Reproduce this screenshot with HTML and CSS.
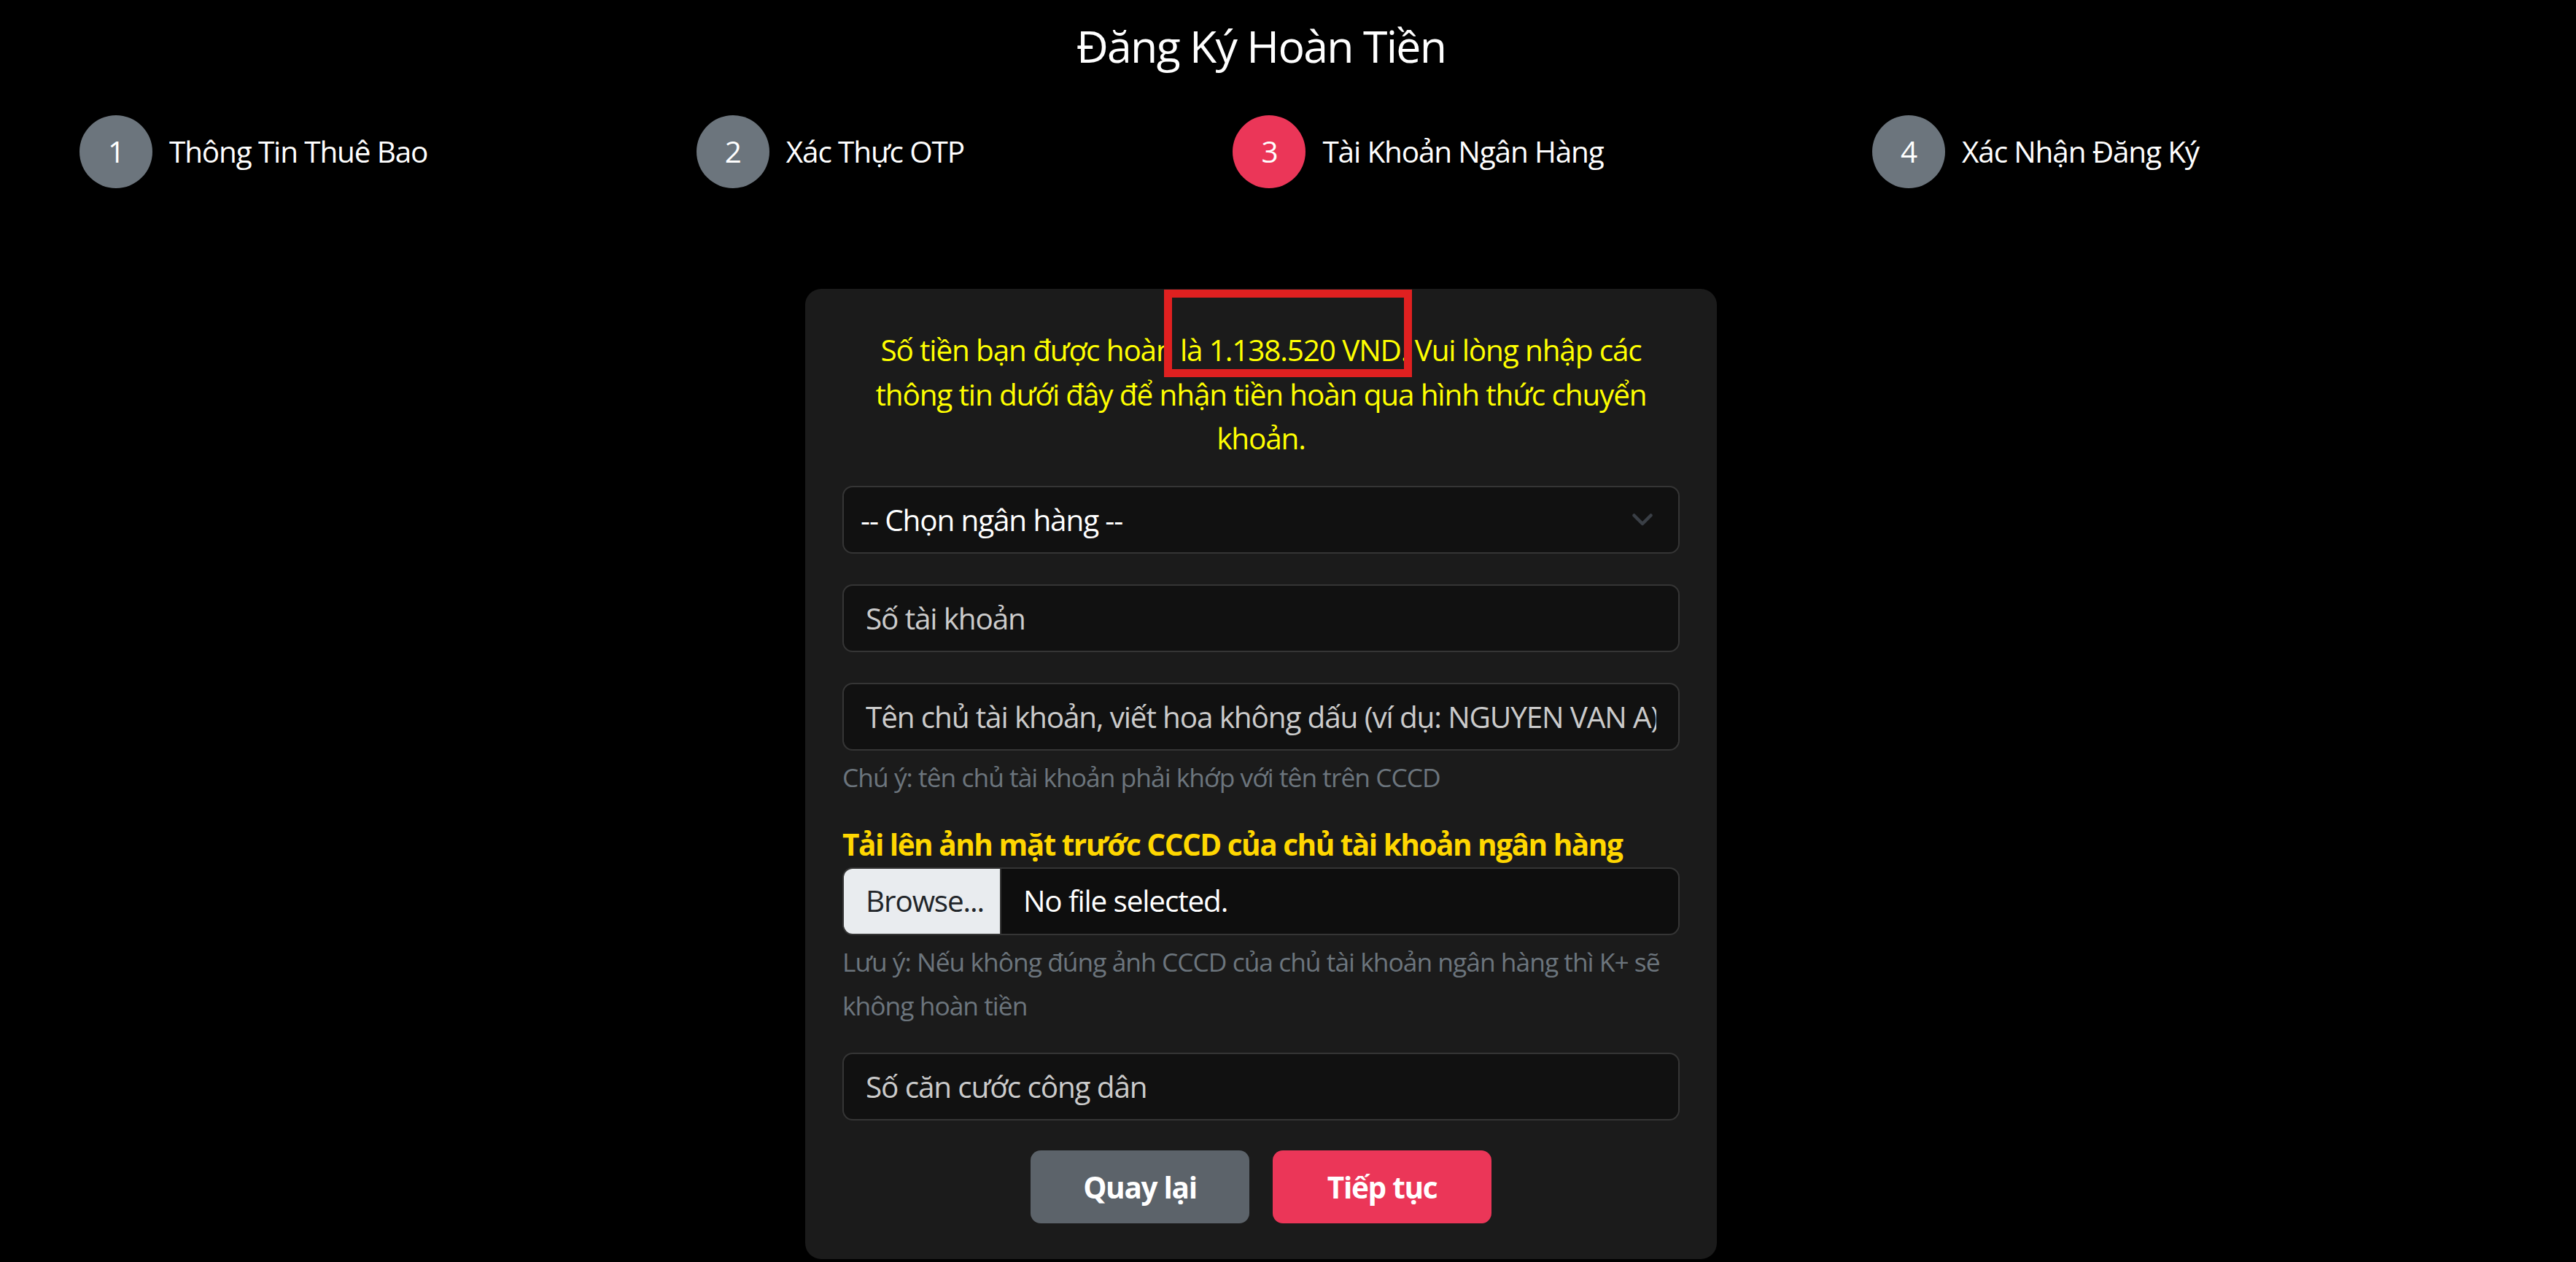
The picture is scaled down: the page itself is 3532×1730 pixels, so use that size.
FILE: index.html
```html
<!DOCTYPE html>
<html lang="vi">
<head>
    <meta charset="UTF-8" />
    <meta name="viewport" content="width=device-width, initial-scale=1.0" />
    <title>Đăng Ký Hoàn Tiền</title>
    <link rel="stylesheet" href="styles.css">
</head>
<body>
    <div class="page">
        <h1 class="title">Đăng Ký Hoàn Tiền</h1>

        <div class="steps">
            <div class="step">
                <span class="step-num">1</span>
                <span class="step-label">Thông Tin Thuê Bao</span>
            </div>
            <div class="step">
                <span class="step-num">2</span>
                <span class="step-label">Xác Thực OTP</span>
            </div>
            <div class="step active">
                <span class="step-num">3</span>
                <span class="step-label">Tài Khoản Ngân Hàng</span>
            </div>
            <div class="step">
                <span class="step-num">4</span>
                <span class="step-label">Xác Nhận Đăng Ký</span>
            </div>
        </div>

        <div class="card">
            <div class="highlight"></div>
            <p class="notice">Số tiền bạn được hoàn là 1.138.520 VND. Vui lòng nhập các thông tin dưới đây để nhận tiền hoàn qua hình thức chuyển khoản.</p>

            <div class="select-wrap">
                <select class="field">
                    <option>-- Chọn ngân hàng --</option>
                </select>
                <svg class="chevron" width="28" height="17" viewBox="0 0 28 17">
                    <path d="M2.5 2.5 L14 14 L25.5 2.5" fill="none" stroke="#3a3f46" stroke-width="4.5" stroke-linecap="round" stroke-linejoin="round"/>
                </svg>
            </div>

            <input class="field gap-top" type="text" placeholder="Số tài khoản">

            <input class="field gap-top" type="text" placeholder="Tên chủ tài khoản, viết hoa không dấu (ví dụ: NGUYEN VAN A)">
            <div class="hint">Chú ý: tên chủ tài khoản phải khớp với tên trên CCCD</div>

            <div class="upload-title">Tải lên ảnh mặt trước CCCD của chủ tài khoản ngân hàng</div>
            <label class="file-field">
                <span class="file-btn">Browse...</span>
                <span class="file-name">No file selected.</span>
            </label>
            <div class="hint">Lưu ý: Nếu không đúng ảnh CCCD của chủ tài khoản ngân hàng thì K+ sẽ không hoàn tiền</div>

            <input class="field gap-top-sm" type="text" placeholder="Số căn cước công dân">

            <div class="actions">
                <button class="btn btn-back">Quay lại</button>
                <button class="btn btn-next">Tiếp tục</button>
            </div>
        </div>
    </div>
</body>
</html>
```

FILE: styles.css
```css
body {
    margin: 0;
    background: #000;
    color: #fff;
    font-family: "Open Sans", "Noto Sans", sans-serif;
    font-size: 40.5px;
    line-height: 1.5;
    letter-spacing: -1.15px;
}

.page {
    width: 3458px;
}

.title {
    margin: 27px 0 0;
    font-size: 60.75px;
    font-weight: 400;
    line-height: 1.2;
    letter-spacing: -1.7px;
    text-align: center;
}

.steps {
    display: flex;
    justify-content: space-between;
    align-items: center;
    width: 2906px;
    margin: 58px 0 0 109px;
}

.step {
    display: flex;
    align-items: center;
}

.step-num {
    display: flex;
    align-items: center;
    justify-content: center;
    width: 100px;
    height: 100px;
    border-radius: 50%;
    background: #6c757d;
}

.step.active .step-num {
    background: #eb3658;
}

.step-label {
    margin-left: 23px;
}

.card {
    position: relative;
    width: 1250px;
    box-sizing: border-box;
    margin: 138px auto 0;
    padding: 54px 51px 49px;
    background: #1b1b1b;
    border-radius: 22px;
}

.highlight {
    position: absolute;
    left: 492px;
    top: 1px;
    width: 340px;
    height: 120px;
    box-sizing: border-box;
    border: 11px solid #e02020;
}

.notice {
    margin: 0 0 34px;
    color: #ffff00;
    text-align: center;
}

.field {
    display: block;
    width: 100%;
    height: 93px;
    box-sizing: border-box;
    padding: 0 30px;
    background: #111;
    border: 2px solid #353535;
    border-radius: 14px;
    color: #fff;
    font-family: inherit;
    font-size: 40.5px;
    letter-spacing: -1.15px;
    outline: none;
}

.field::placeholder {
    color: #cbcbcb;
}

select.field {
    appearance: none;
    padding-left: 23px;
}

.select-wrap {
    position: relative;
}

.chevron {
    position: absolute;
    right: 37px;
    top: 38px;
}

.gap-top {
    margin-top: 42px;
}

.gap-top-sm {
    margin-top: 34px;
}

.hint {
    margin-top: 6px;
    color: #6c757d;
    font-size: 35.4px;
    line-height: 60.75px;
    letter-spacing: -1px;
}

.upload-title {
    margin-top: 32px;
    color: #ffd700;
    font-weight: 700;
    letter-spacing: -1.5px;
}

.file-field {
    display: flex;
    height: 93px;
    box-sizing: border-box;
    background: #0e0e0e;
    border: 2px solid #353535;
    border-radius: 14px;
    overflow: hidden;
}

.file-btn {
    display: flex;
    align-items: center;
    width: 216px;
    box-sizing: border-box;
    padding-left: 30px;
    background: #e9ecef;
    color: #212529;
    border-right: 2px solid #353535;
}

.file-name {
    display: flex;
    align-items: center;
    padding-left: 30px;
}

.actions {
    display: flex;
    justify-content: center;
    gap: 32px;
    margin-top: 41px;
}

.btn {
    width: 300px;
    height: 100px;
    border: none;
    border-radius: 14px;
    color: #fff;
    font-family: inherit;
    font-size: 40.5px;
    font-weight: 700;
    letter-spacing: -1.3px;
}

.btn-back {
    background: #5c636a;
}

.btn-next {
    background: #eb3658;
}
```
